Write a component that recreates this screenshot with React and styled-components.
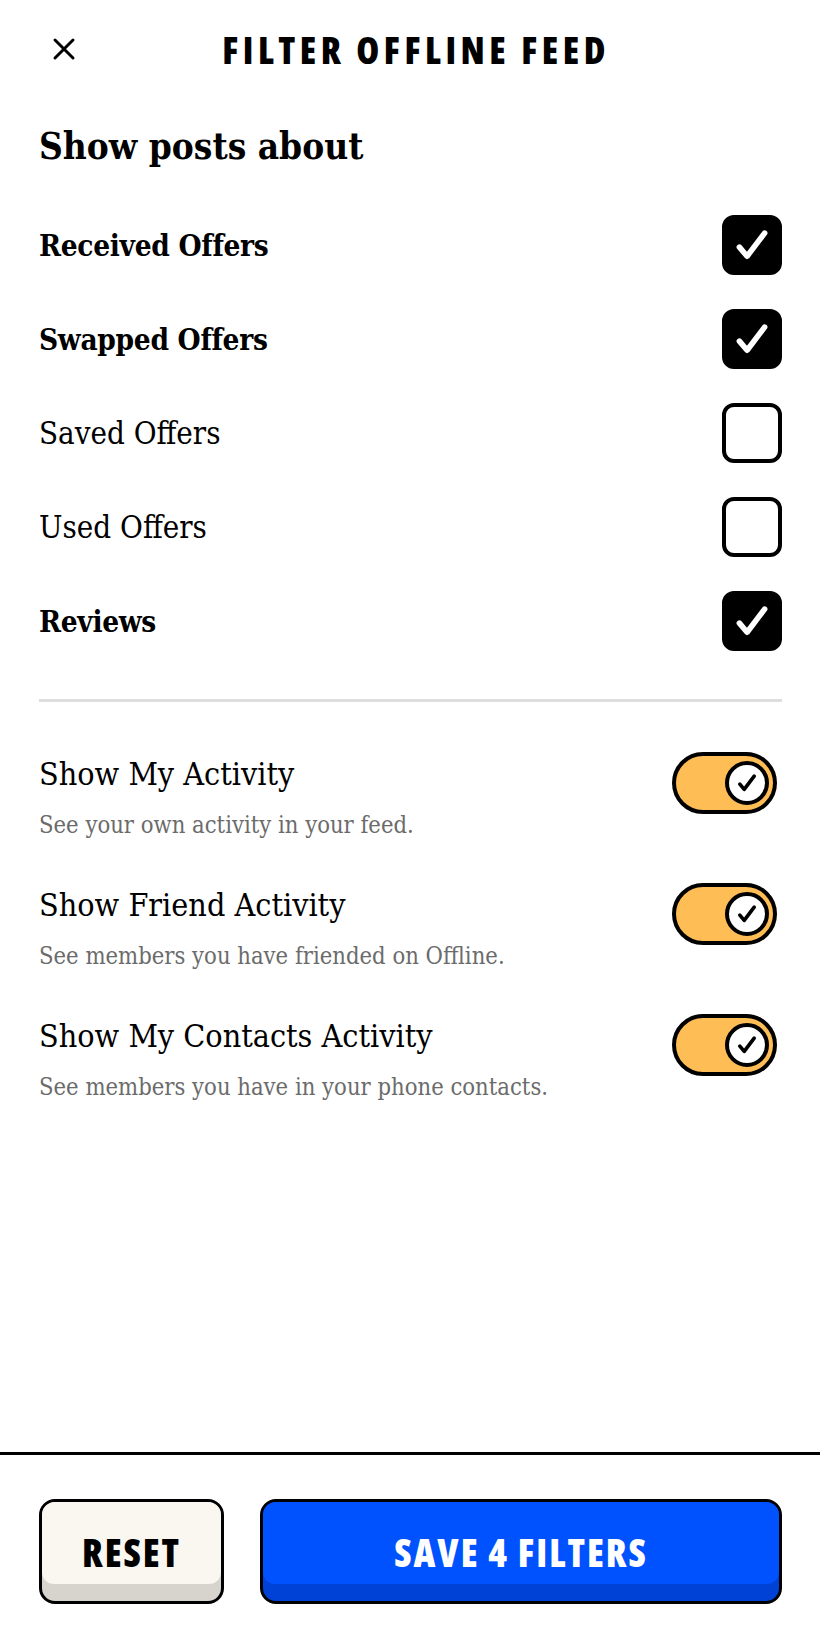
import React, { useState } from "react";
import styled, { createGlobalStyle } from "styled-components";

const Global = createGlobalStyle`
  html, body { margin: 0; padding: 0; background: #ffffff; }
  * { box-sizing: border-box; }
`;

const serif = `"DejaVu Serif", "Liberation Serif", serif`;
const heavy = `"Open Sans", "Liberation Sans", sans-serif`;

const Page = styled.div`
  width: 820px;
  min-height: 1644px;
  display: flex;
  flex-direction: column;
  background: #fff;
  color: #000;
`;

const Header = styled.header`
  height: 98px;
  display: grid;
  grid-template-columns: 1fr auto 1fr;
  align-items: center;
  padding: 0 38px 0 50px;
`;

const CloseButton = styled.button`
  justify-self: start;
  width: 28px;
  height: 28px;
  padding: 0;
  border: 0;
  background: transparent;
  display: flex;
  align-items: center;
  justify-content: center;
`;

const Title = styled.h1`
  margin: 0;
  font-family: ${heavy};
  font-stretch: 75%;
  font-weight: 800;
  font-size: 37px;
  letter-spacing: 4.5px;
  text-transform: uppercase;
`;

const Content = styled.main`
  padding: 0 38px 0 39px;
  flex: 1;
`;

const Heading = styled.h2`
  margin: 27px 0 29px;
  font-family: ${serif};
  font-stretch: condensed;
  font-weight: 700;
  font-size: 36.7px;
  line-height: 44px;
`;

const CheckRow = styled.label`
  height: 94px;
  display: flex;
  align-items: center;
  justify-content: space-between;
`;

const CheckLabel = styled.span`
  font-family: ${serif};
  font-stretch: condensed;
  font-size: ${(p) => (p.$bold ? "29.5px" : "31px")};
  font-weight: ${(p) => (p.$bold ? 700 : 400)};
  letter-spacing: ${(p) => (p.$bold ? "-0.3px" : "0")};
`;

const Box = styled.span`
  width: 60px;
  height: 60px;
  border: 4px solid #000;
  border-radius: 12px;
  background: ${(p) => (p.$checked ? "#000" : "#fff")};
  display: flex;
  align-items: center;
  justify-content: center;
`;

const Divider = styled.hr`
  margin: 31px 0 52px;
  border: 0;
  height: 3px;
  background: #dedede;
`;

const ToggleRow = styled.div`
  display: flex;
  justify-content: space-between;
  align-items: flex-start;
  margin-bottom: 46px;
`;

const ToggleText = styled.div`
  display: flex;
  flex-direction: column;
`;

const ToggleTitle = styled.span`
  font-family: ${serif};
  font-stretch: condensed;
  font-size: 32px;
  line-height: 40px;
`;

const ToggleSub = styled.span`
  margin-top: 17px;
  font-family: ${serif};
  font-stretch: condensed;
  font-size: 23.6px;
  line-height: 28px;
  color: #6b6b6b;
`;

const Switch = styled.span`
  margin-top: -2px;
  margin-right: 5px;
  width: 105px;
  height: 62px;
  border: 4px solid #000;
  border-radius: 31px;
  background: #ffbd55;
  display: flex;
  align-items: center;
  justify-content: flex-end;
  padding-right: 4px;
`;

const Knob = styled.span`
  width: 44px;
  height: 44px;
  border: 4px solid #000;
  border-radius: 50%;
  background: #fff;
  display: flex;
  align-items: center;
  justify-content: center;
`;

const Footer = styled.footer`
  border-top: 3px solid #000;
  padding: 44px 38px 40px 39px;
  display: flex;
  gap: 36px;
`;

const Button = styled.button`
  position: relative;
  height: 105px;
  width: ${(p) => (p.$grow ? "auto" : "185px")};
  flex: ${(p) => (p.$grow ? 1 : "none")};
  border: 3px solid #000;
  border-radius: 16px;
  background: ${(p) => p.$shade};
  overflow: hidden;
  display: flex;
  align-items: center;
  justify-content: center;
  padding: 0;
  &::before {
    content: "";
    position: absolute;
    left: 0;
    right: 0;
    top: 0;
    bottom: 17px;
    border-radius: 0 0 12px 12px;
    background: ${(p) => p.$face};
  }
`;

const ButtonText = styled.span`
  position: relative;
  font-family: ${heavy};
  font-stretch: 75%;
  font-weight: 800;
  font-size: 38px;
  letter-spacing: 2px;
  color: ${(p) => p.$color};
`;

const Check = ({ size = 30, color = "#fff", width = 5 }) => (
  <svg width={size} height={size} viewBox="0 0 30 30" fill="none">
    <path
      d="M6 16.5 L11.5 23 L24 6.5"
      stroke={color}
      strokeWidth={width}
      strokeLinecap="round"
      strokeLinejoin="round"
    />
  </svg>
);

const items = [
  { label: "Received Offers", checked: true },
  { label: "Swapped Offers", checked: true },
  { label: "Saved Offers", checked: false },
  { label: "Used Offers", checked: false },
  { label: "Reviews", checked: true },
];

const toggles = [
  { title: "Show My Activity", sub: "See your own activity in your feed." },
  { title: "Show Friend Activity", sub: "See members you have friended on Offline." },
  { title: "Show My Contacts Activity", sub: "See members you have in your phone contacts." },
];

export default function App() {
  const [checks] = useState(items);
  return (
    <Page>
      <Global />
      <Header>
        <CloseButton aria-label="Close">
          <svg width="24" height="24" viewBox="0 0 24 24" fill="none">
            <path d="M3 3 L21 21 M21 3 L3 21" stroke="#000" strokeWidth="3" strokeLinecap="round" />
          </svg>
        </CloseButton>
        <Title>Filter Offline Feed</Title>
        <span />
      </Header>
      <Content>
        <Heading>Show posts about</Heading>
        {checks.map((it) => (
          <CheckRow key={it.label}>
            <CheckLabel $bold={it.checked}>{it.label}</CheckLabel>
            <Box $checked={it.checked}>{it.checked && <Check size={42} width={4} />}</Box>
          </CheckRow>
        ))}
        <Divider />
        {toggles.map((t) => (
          <ToggleRow key={t.title}>
            <ToggleText>
              <ToggleTitle>{t.title}</ToggleTitle>
              <ToggleSub>{t.sub}</ToggleSub>
            </ToggleText>
            <Switch>
              <Knob>
                <Check size={24} color="#000" width={4.5} />
              </Knob>
            </Switch>
          </ToggleRow>
        ))}
      </Content>
      <Footer>
        <Button $face="#faf6f0" $shade="#d7d4cd">
          <ButtonText $color="#000">RESET</ButtonText>
        </Button>
        <Button $grow $face="#0052ff" $shade="#0041d6">
          <ButtonText $color="#fff">SAVE 4 FILTERS</ButtonText>
        </Button>
      </Footer>
    </Page>
  );
}
